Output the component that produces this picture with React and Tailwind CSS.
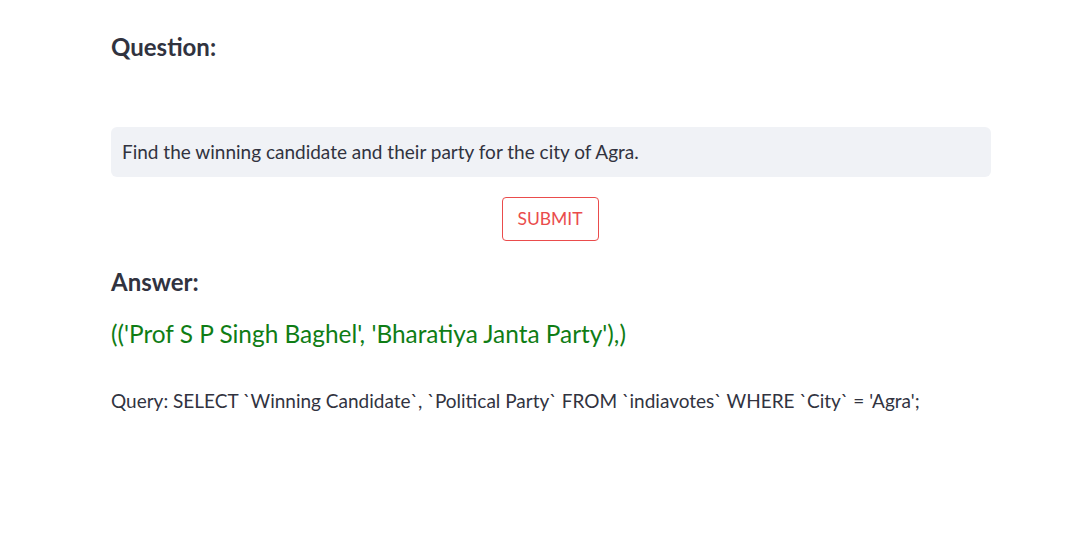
export default function App() {
  return (
    <div className="min-h-[560px] w-full bg-white" style={{ fontFamily: "Lato, 'Noto Sans', sans-serif" }}>
      <div className="ml-[111px] w-[880px] pt-[33px] text-[#31333f]">
        <div className="h-[28px] text-[24px] font-bold leading-[28px]">Question:</div>
        <div className="mt-[66px] flex h-[50px] items-center rounded-[6px] bg-[#f0f2f6] px-[11px] text-[19px]">
          Find the winning candidate and their party for the city of Agra.
        </div>
        <div className="mt-[20px] flex justify-center pr-[2px]">
          <button className="flex h-[44px] w-[97px] items-center justify-center rounded-[4px] border border-[#ea4c4c] bg-white pt-[1px] text-[17.5px] text-[#ea4c4c]">
            SUBMIT
          </button>
        </div>
        <div className="mt-[27px] h-[28px] text-[24px] font-bold leading-[28px]">Answer:</div>
        <div className="mt-[22px] h-[32px] text-[24.4px] leading-[32px] text-[#0f7d15]">(('Prof S P Singh Baghel', 'Bharatiya Janta Party'),)</div>
        <div className="mt-[39px] h-[24px] text-[19px] leading-[24px]">
          Query: SELECT `Winning Candidate`, `Political Party` FROM `indiavotes` WHERE `City` = 'Agra';
        </div>
      </div>
    </div>
  );
}
